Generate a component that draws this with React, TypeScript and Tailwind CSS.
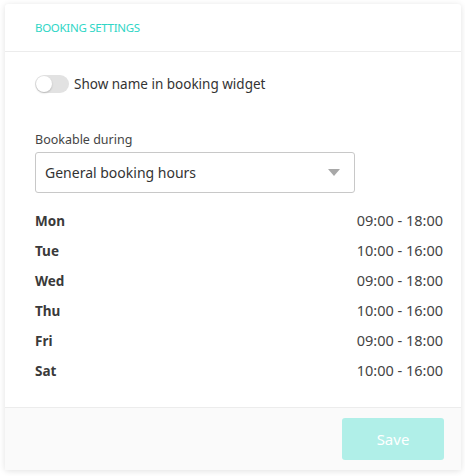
import React, { useState } from 'react';

const hours = [
  { day: 'Mon', time: '09:00 - 18:00' },
  { day: 'Tue', time: '10:00 - 16:00' },
  { day: 'Wed', time: '09:00 - 18:00' },
  { day: 'Thu', time: '10:00 - 16:00' },
  { day: 'Fri', time: '09:00 - 18:00' },
  { day: 'Sat', time: '10:00 - 16:00' },
];

export default function App() {
  const [showName, setShowName] = useState(false);

  return (
    <div
      className="w-[465px] h-[476px] bg-white pt-[4px] pl-[5px]"
      style={{ fontFamily: '"Noto Sans", Lato, sans-serif' }}
    >
      <div className="w-[456px] h-[466px] bg-white rounded-[3px] shadow-[0_1px_6px_rgba(0,0,0,0.12)] flex flex-col">
        {/* header */}
        <div className="h-[48px] border-b border-[#ececec] flex items-center pl-[30px]">
          <span className="text-[11.5px] text-[#2fd6c6] uppercase tracking-[-0.3px]">Booking Settings</span>
        </div>

        {/* body */}
        <div className="flex-1 pl-[30px] pr-[18px] pt-[23px]">
          <div className="flex items-center gap-[5px]">
            <button
              onClick={() => setShowName(!showName)}
              className={`relative w-[34px] h-[18px] rounded-full ${showName ? 'bg-[#2fd6c6]' : 'bg-[#e2e2e2]'}`}
            >
              <span
                className={`absolute top-[1px] w-[16px] h-[16px] rounded-full bg-white shadow-[0_1px_2px_rgba(0,0,0,0.2)] ${
                  showName ? 'left-[17px]' : 'left-[1px]'
                }`}
              ></span>
            </button>
            <span className="text-[13.5px] text-[#333] leading-[18px]">Show name in booking widget</span>
          </div>

          <div className="mt-[38px] text-[12.5px] text-[#444] leading-[18px]">Bookable during</div>
          <div className="mt-[3px] w-[320px] h-[41px] border border-[#c8c8c8] rounded-[3px] flex items-center justify-between pl-[9px] pr-[14px]">
            <span className="text-[14px] text-[#333]">General booking hours</span>
            <svg width="12" height="7" viewBox="0 0 12 7">
              <path d="M0 0h12L6 7z" fill="#a8a8a8" />
            </svg>
          </div>

          <div className="mt-[13px] flex flex-col">
            {hours.map((h) => (
              <div key={h.day} className="h-[30px] flex items-center justify-between">
                <span className="text-[13.5px] font-bold text-[#3a3a3a]">{h.day}</span>
                <span className="text-[14.5px] text-[#444]">{h.time}</span>
              </div>
            ))}
          </div>
        </div>

        {/* footer */}
        <div className="h-[63px] bg-[#fafafa] border-t border-[#ececec] flex items-center justify-end pr-[17px]">
          <button className="w-[102px] h-[42px] rounded-[3px] bg-[#b0efe8] text-white text-[15px]">Save</button>
        </div>
      </div>
    </div>
  );
}
